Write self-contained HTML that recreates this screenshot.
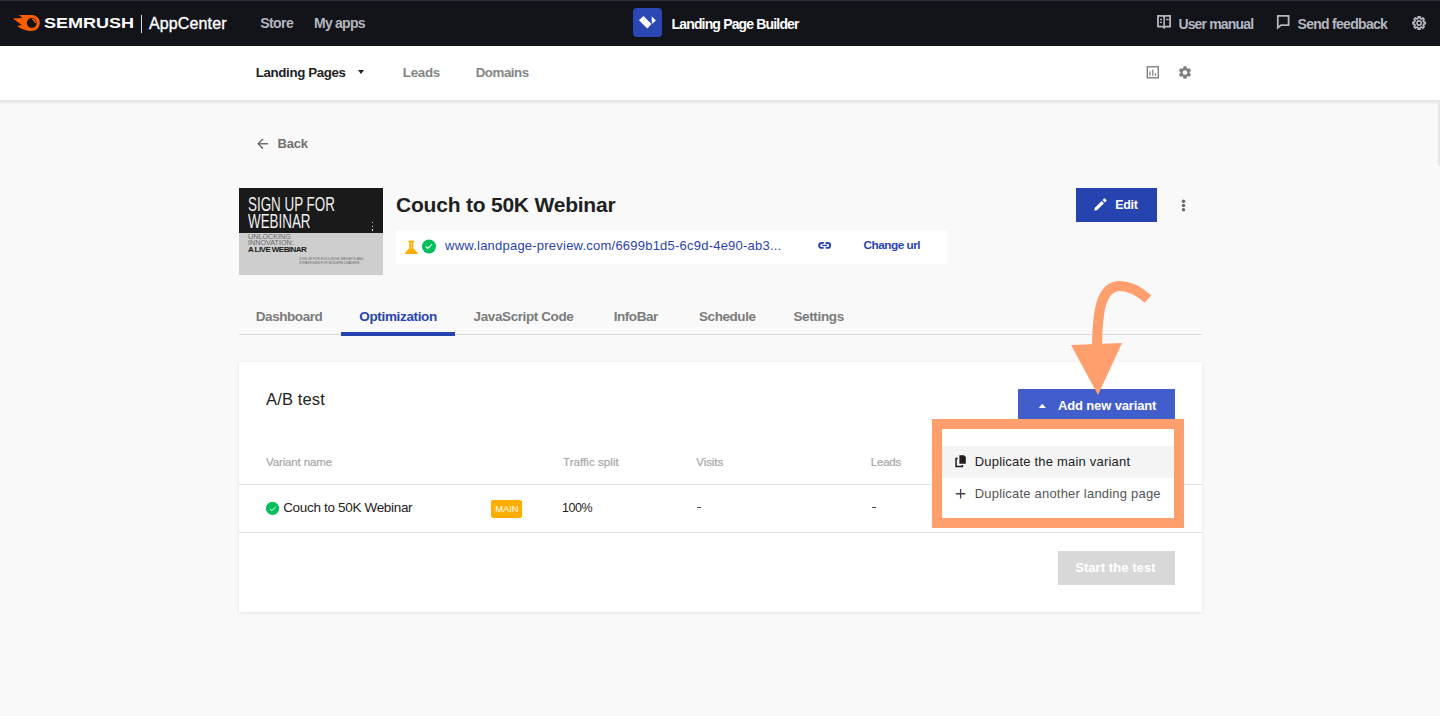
<!DOCTYPE html>
<html><head><meta charset="utf-8">
<style>
*{margin:0;padding:0;box-sizing:border-box}
html,body{width:1440px;height:716px;overflow:hidden;background:#f9f9f9;font-family:"Liberation Sans",sans-serif;position:relative}
.a{position:absolute}
.t{position:absolute;white-space:nowrap;line-height:1}
</style></head><body>
<!-- bars -->
<div class="a" style="left:0;top:0;width:1440px;height:46px;background:#131419"></div>
<div class="a" style="left:0;top:0;width:1440px;height:1px;background:#2d303c"></div>
<div class="a" style="left:0;top:46px;width:1440px;height:54px;background:#fff"></div>
<div class="a" style="left:0;top:100px;width:1440px;height:5px;background:linear-gradient(#e2e2e2,#f9f9f9)"></div>

<div class="a" style="left:1438px;top:100px;width:2px;height:66px;background:#e6e6e6"></div>
<!-- semrush logo -->
<svg class="a" style="left:0;top:0" width="48" height="46" viewBox="0 0 48 46">
  <path d="M18.9 15.1 L31.8 15 A8 8 0 0 1 31.8 31 Q24 31 16.9 26 L21.8 25 L12.9 18.5 L22.5 18 Z" fill="#ff5e00"/>
  <circle cx="31.8" cy="23" r="4.9" fill="#131419"/>
  <path d="M32 19.4 A3.5 3.5 0 0 1 35.4 23" stroke="#ff5e00" stroke-width="1.4" fill="none"/>
</svg>
<div class="t" id="semrush" style="left:44px;top:15px;font-size:15px;font-weight:bold;color:#fff;transform-origin:0 0;transform:scaleX(1.2)">SEMRUSH</div>
<div class="a" style="left:141px;top:15px;width:1px;height:18px;background:#d8d8dc"></div>

<!-- app icon -->
<div class="a" style="left:633px;top:8px;width:29px;height:29px;border-radius:4px;background:#2a47b3"></div>
<svg class="a" style="left:620px;top:0" width="50" height="46" viewBox="620 0 50 46">
  <path d="M638.9 20.3 L643.5 16 L651.4 24.1 L647.3 28.6 Z" fill="#fff"/>
  <path d="M651.6 16.3 L655.9 20.6 L651.9 24.1 Z" fill="#fff"/>
</svg>

<!-- right icons top -->
<svg class="a" style="left:1150px;top:0" width="290" height="46" viewBox="1150 0 290 46">
  <g fill="none" stroke="#b4b7c0" stroke-width="1.8">
    <path d="M1158 15.9 H1163.2 L1164.2 16.9 L1165.2 15.9 H1170.1 V26.6 H1165.2 L1164.2 27.8 L1163.2 26.6 H1158 Z"/>
    <path d="M1164.2 17 V26.5" stroke-width="1.6"/>
    <path d="M1277.8 15.9 H1288.6 V25.1 H1281 L1277.8 27.8 Z"/>
  </g>
  <g stroke="#b4b7c0" stroke-width="1.3">
    <path d="M1160 19.5 H1162 M1160 22.4 H1162 M1166.2 19.5 H1168.6"/>
  </g>
  <g transform="translate(1419.1 23)">
    <path id="gearo" fill="none" stroke="#b4b7c0" stroke-width="1.7" stroke-linejoin="round" d="M-1.13 -4.56 L-1.02 -6.12 L1.02 -6.12 L1.13 -4.56 L2.42 -4.03 L3.60 -5.04 L5.04 -3.60 L4.03 -2.42 L4.56 -1.13 L6.12 -1.02 L6.12 1.02 L4.56 1.13 L4.03 2.42 L5.04 3.60 L3.60 5.04 L2.42 4.03 L1.13 4.56 L1.02 6.12 L-1.02 6.12 L-1.13 4.56 L-2.42 4.03 L-3.60 5.04 L-5.04 3.60 L-4.03 2.42 L-4.56 1.13 L-6.12 1.02 L-6.12 -1.02 L-4.56 -1.13 L-4.03 -2.42 L-5.04 -3.60 L-3.60 -5.04 L-2.42 -4.03 Z"/>
    <circle r="2.1" fill="none" stroke="#b4b7c0" stroke-width="1.6"/>
  </g>
</svg>

<!-- subnav icons -->
<div class="a" style="left:357.8px;top:70.3px;width:0;height:0;border-left:3.6px solid transparent;border-right:3.6px solid transparent;border-top:4.2px solid #222"></div>
<svg class="a" style="left:1140px;top:60px" width="60" height="26" viewBox="1140 60 60 26">
  <rect x="1147.3" y="66.8" width="11" height="11" fill="none" stroke="#808080" stroke-width="1.4"/>
  <path d="M1149.9 71.2 V75.7 M1152.8 69.4 V75.7 M1155.5 73.2 V75.7" stroke="#808080" stroke-width="1.2"/>
  <g transform="translate(1185 72.5) scale(0.64) translate(-12 -12)"><path id="gearf" fill="#808080" d="M19.14,12.94c0.04-0.3,0.06-0.61,0.06-0.94c0-0.32-0.02-0.64-0.07-0.94l2.03-1.58c0.18-0.14,0.23-0.41,0.12-0.61 l-1.92-3.32c-0.12-0.22-0.37-0.29-0.59-0.22l-2.39,0.96c-0.5-0.38-1.03-0.7-1.62-0.94L14.4,2.81c-0.04-0.24-0.24-0.41-0.48-0.41 h-3.84c-0.24,0-0.43,0.17-0.47,0.41L9.25,5.35C8.66,5.59,8.12,5.92,7.63,6.29L5.24,5.33c-0.22-0.08-0.47,0-0.59,0.22L2.74,8.87 C2.62,9.08,2.66,9.34,2.86,9.48l2.03,1.58C4.84,11.36,4.8,11.69,4.8,12s0.02,0.64,0.07,0.94l-2.03,1.58 c-0.18,0.14-0.23,0.41-0.12,0.61l1.92,3.32c0.12,0.22,0.37,0.29,0.59,0.22l2.39-0.96c0.5,0.38,1.03,0.7,1.62,0.94l0.36,2.54 c0.05,0.24,0.24,0.41,0.48,0.41h3.84c0.24,0,0.44-0.17,0.47-0.41l0.36-2.54c0.59-0.24,1.13-0.56,1.62-0.94l2.39,0.96 c0.22,0.08,0.47,0,0.59-0.22l1.92-3.32c0.12-0.22,0.07-0.47-0.12-0.61L19.14,12.94z M12,15.6c-1.98,0-3.6-1.62-3.6-3.6 s1.62-3.6,3.6-3.6s3.6,1.62,3.6,3.6S13.98,15.6,12,15.6z"/></g>
</svg>

<!-- back arrow -->
<svg class="a" style="left:250px;top:130px" width="30" height="26" viewBox="250 130 30 26">
  <path d="M268 143.8 H258.5 M263 139 L258.2 143.8 L263 148.6" fill="none" stroke="#707070" stroke-width="1.5"/>
</svg>

<!-- thumbnail -->
<div class="a" style="left:239px;top:188px;width:144px;height:87px;background:#cecece;overflow:hidden">
  <div class="a" style="left:0;top:0;width:144px;height:45px;background:#1a1a1a"></div>
  <div class="t" id="th1" style="left:9px;top:8px;font-size:20.4px;color:#f0f0f0;transform-origin:0 0;transform:scaleX(0.657);line-height:16.8px">SIGN UP FOR<br>WEBINAR</div>
  <div class="a" style="left:133px;top:34px;width:1.4px;height:1.4px;background:#ccc"></div>
  <div class="a" style="left:133px;top:37.5px;width:1.4px;height:1.4px;background:#ccc"></div>
  <div class="a" style="left:133px;top:41px;width:1.4px;height:1.6px;background:#eee"></div>
  <div class="t" id="th2" style="left:9px;top:46px;font-size:7.2px;color:#6a6a6a;line-height:6px;transform-origin:0 0;transform:scaleX(1.0)">UNLOCKING<br>INNOVATION:</div>
  <div class="t" id="th3" style="left:9px;top:58.2px;font-size:8px;font-weight:bold;color:#1a1a1a;letter-spacing:-0.55px">A LIVE WEBINAR</div>
  <div class="t" id="th4" style="left:60px;top:69px;font-size:3.8px;color:#666;line-height:4px;transform-origin:0 0;transform:scaleX(0.87)">JOIN US FOR EXCLUSIVE INSIGHTS AND<br>STRATEGIES FOR MODERN LEADERS</div>
</div>
<!-- url bar -->
<div class="a" style="left:396px;top:230px;width:551px;height:34px;background:#fff"></div>
<svg class="a" style="left:400px;top:236px" width="40" height="22" viewBox="400 236 40 22">
  <path d="M408.2 240.8 H414.4 V242.2 H413.3 V248.2 L417.8 253 Q418 254 417 254 H405.6 Q404.6 254 405 253 L409.3 248.2 V242.2 H408.2 Z" fill="#ffae00"/>
  <rect x="410.9" y="242.3" width="1.1" height="6.5" fill="#ffd37a"/>
  <circle cx="429" cy="246.5" r="7" fill="#00bf5a"/>
  <path d="M425.6 246.4 L427.6 248.5 L432.1 244.2" fill="none" stroke="#fff" stroke-width="1.1"/>
</svg>
<svg class="a" style="left:812px;top:236px" width="26" height="20" viewBox="812 236 26 20">
  <g fill="none" stroke="#2a43b0" stroke-width="1.9">
    <path d="M823.7 243 H821.6 A2.45 2.45 0 0 0 821.6 247.9 H823.7"/>
    <path d="M825.6 243 H827.7 A2.45 2.45 0 0 1 827.7 247.9 H825.6"/>
    <path d="M822.2 245.45 H827.2" stroke-width="1.4"/>
  </g>
</svg>

<!-- edit button -->
<div class="a" style="left:1076px;top:188px;width:81px;height:34px;background:#2644b0"></div>
<svg class="a" style="left:1090px;top:195px" width="20" height="20" viewBox="1090 195 20 20">
  <path d="M1094.3 210.6 L1094.6 207.9 L1101.6 200.9 L1104 203.3 L1097 210.3 Z" fill="#fff"/>
  <path d="M1102.5 200 L1104.1 198.4 Q1104.5 198.1 1104.9 198.4 L1106.5 200 Q1106.8 200.4 1106.5 200.8 L1104.9 202.4 Z" fill="#fff"/>
</svg>
<svg class="a" style="left:1176px;top:194px" width="16" height="22" viewBox="1176 194 16 22">
  <circle cx="1183.5" cy="201.2" r="1.7" fill="#666"/>
  <circle cx="1183.5" cy="205.5" r="1.7" fill="#666"/>
  <circle cx="1183.5" cy="209.8" r="1.7" fill="#666"/>
</svg>

<!-- tabs -->
<div class="a" style="left:239px;top:334px;width:963px;height:1px;background:#dadada"></div>
<div class="a" style="left:341px;top:332px;width:114px;height:4px;background:#2644b0"></div>

<!-- card -->
<div class="a" style="left:239px;top:362px;width:963px;height:250px;background:#fff;box-shadow:0 1px 4px rgba(0,0,0,.09)"></div>
<div class="a" style="left:1018px;top:389px;width:157px;height:34px;background:#425dcc"></div>
<svg class="a" style="left:1030px;top:396px" width="24" height="20" viewBox="1030 396 24 20">
  <path d="M1038.7 408 L1042.3 403.8 L1045.9 408 Z" fill="#fff"/>
</svg>
<div class="a" style="left:239px;top:484px;width:963px;height:1px;background:#e0e0e0"></div>
<div class="a" style="left:239px;top:532px;width:963px;height:1px;background:#e0e0e0"></div>
<svg class="a" style="left:262px;top:498px" width="24" height="20" viewBox="262 498 24 20">
  <circle cx="272.5" cy="508.4" r="6.6" fill="#00bf5a"/>
  <path d="M269.9 508.9 L271.8 510.6 L275.7 507" fill="none" stroke="#fff" stroke-width="1.0"/>
</svg>
<div class="a" style="left:491px;top:500px;width:31px;height:18px;border-radius:2px;background:#ffae00"></div>
<div class="t" style="left:495.3px;top:503.5px;font-size:9.4px;color:#fff;letter-spacing:-0.1px">MAIN</div>
<div class="a" style="left:696.6px;top:507px;width:4.4px;height:1.3px;background:#4a4a4a"></div>
<div class="a" style="left:872px;top:507px;width:4.4px;height:1.3px;background:#4a4a4a"></div>

<div class="a" style="left:1058px;top:551px;width:117px;height:34px;background:#d8d8d8"></div>

<!-- dropdown with orange frame -->
<div class="a" style="left:932px;top:419px;width:252px;height:109px;border:10px solid #ff9f6e;background:#fff"></div>
<div class="a" style="left:942px;top:446px;width:232px;height:32px;background:#f4f4f4"></div>
<svg class="a" style="left:950px;top:450px" width="20" height="50" viewBox="950 450 20 50">
  <path d="M959.4 455.2 H964 L965.8 457 V463.7 H959.4 Z" fill="#1e1e1e"/>
  <path d="M957.8 458.6 H956 V466.5 H962.4 V465" fill="none" stroke="#1e1e1e" stroke-width="1.5"/>
  <path d="M960.6 489 V498.5 M955.8 493.75 H965.4" stroke="#444" stroke-width="1.3"/>
</svg>

<div class="t" style="left:149.0px;top:16px;font-size:16px;letter-spacing:0.125px;color:#ffffff;-webkit-text-stroke:0.35px #fff;">AppCenter</div>
<div class="t" style="left:260.3px;top:16px;font-size:14px;font-weight:bold;letter-spacing:-0.6px;color:#b4b7c0;">Store</div>
<div class="t" style="left:314.0px;top:16px;font-size:14px;font-weight:bold;letter-spacing:-0.75px;color:#b4b7c0;">My apps</div>
<div class="t" style="left:671.5px;top:17px;font-size:14px;font-weight:bold;letter-spacing:-0.837px;color:#ffffff;">Landing Page Builder</div>
<div class="t" style="left:1178.4px;top:17px;font-size:14px;font-weight:bold;letter-spacing:-0.84px;color:#b4b7c0;">User manual</div>
<div class="t" style="left:1297.5px;top:17px;font-size:14px;font-weight:bold;letter-spacing:-0.708px;color:#b4b7c0;">Send feedback</div>
<div class="t" style="left:255.8px;top:66px;font-size:13.3px;font-weight:bold;letter-spacing:-0.367px;color:#222222;">Landing Pages</div>
<div class="t" style="left:402.75px;top:66px;font-size:13.3px;font-weight:bold;letter-spacing:-0.237px;color:#858585;">Leads</div>
<div class="t" style="left:475.7px;top:66px;font-size:13.3px;font-weight:bold;letter-spacing:-0.45px;color:#858585;">Domains</div>
<div class="t" style="left:277.6px;top:137px;font-size:13px;font-weight:bold;letter-spacing:-0.2px;color:#707070;">Back</div>
<div class="t" style="left:396.0px;top:194px;font-size:21px;font-weight:bold;letter-spacing:-0.211px;color:#1f1f1f;">Couch to 50K Webinar</div>
<div class="t" style="left:445.1px;top:239px;font-size:13px;letter-spacing:0.222px;color:#2a43b0;">www.landpage-preview.com/6699b1d5-6c9d-4e90-ab3...</div>
<div class="t" style="left:863.5px;top:240px;font-size:11.8px;font-weight:bold;letter-spacing:-0.5px;color:#2a43b0;">Change url</div>
<div class="t" style="left:1115.2px;top:199px;font-size:12.5px;font-weight:bold;letter-spacing:-0.333px;color:#ffffff;">Edit</div>
<div class="t" style="left:255.8px;top:310px;font-size:13.5px;font-weight:bold;letter-spacing:-0.438px;color:#7b7b7b;">Dashboard</div>
<div class="t" style="left:359.3px;top:310px;font-size:13.5px;font-weight:bold;letter-spacing:-0.345px;color:#2a43b0;">Optimization</div>
<div class="t" style="left:473.6px;top:310px;font-size:13.5px;font-weight:bold;letter-spacing:-0.4px;color:#7b7b7b;">JavaScript Code</div>
<div class="t" style="left:613.7px;top:310px;font-size:13.5px;font-weight:bold;letter-spacing:-0.45px;color:#7b7b7b;">InfoBar</div>
<div class="t" style="left:699.0px;top:310px;font-size:13.5px;font-weight:bold;letter-spacing:-0.429px;color:#7b7b7b;">Schedule</div>
<div class="t" style="left:793.4px;top:310px;font-size:13.5px;font-weight:bold;letter-spacing:-0.343px;color:#7b7b7b;">Settings</div>
<div class="t" style="left:266.1px;top:391px;font-size:16.5px;letter-spacing:0.129px;color:#222222;">A/B test</div>
<div class="t" style="left:1058.0px;top:399px;font-size:13px;font-weight:bold;letter-spacing:-0.143px;color:#ffffff;">Add new variant</div>
<div class="t" style="left:266.0px;top:457px;font-size:11.5px;letter-spacing:-0.136px;color:#a6a6a6;-webkit-text-stroke:0.2px #a6a6a6;">Variant name</div>
<div class="t" style="left:563.0px;top:457px;font-size:11.5px;letter-spacing:0.062px;color:#a6a6a6;-webkit-text-stroke:0.2px #a6a6a6;">Traffic split</div>
<div class="t" style="left:696.25px;top:457px;font-size:11.5px;letter-spacing:-0.05px;color:#a6a6a6;-webkit-text-stroke:0.2px #a6a6a6;">Visits</div>
<div class="t" style="left:870.7px;top:457px;font-size:11.5px;letter-spacing:-0.175px;color:#a6a6a6;-webkit-text-stroke:0.2px #a6a6a6;">Leads</div>
<div class="t" style="left:283.2px;top:501px;font-size:13.5px;letter-spacing:-0.326px;color:#222222;">Couch to 50K Webinar</div>
<div class="t" style="left:562.0px;top:502px;font-size:12.5px;letter-spacing:-0.417px;color:#222222;">100%</div>
<div class="t" style="left:1075.2px;top:561px;font-size:13px;font-weight:bold;letter-spacing:0.069px;color:#ffffff;">Start the test</div>
<div class="t" style="left:974.7px;top:455px;font-size:13px;letter-spacing:0.204px;color:#222222;">Duplicate the main variant</div>
<div class="t" style="left:974.7px;top:487px;font-size:13px;letter-spacing:0.203px;color:#555555;">Duplicate another landing page</div>

<!-- arrow -->
<svg class="a" style="left:0;top:0" width="1440" height="716" viewBox="0 0 1440 716">
  <path d="M1097 350 C1097 305 1103 286 1120 286 C1130 286 1140 292 1148 299" stroke="#ff9f6e" stroke-width="10" fill="none"/>
  <path d="M1071 345 L1122 343 L1098 395 Z" fill="#ff9f6e"/>
</svg>
</body></html>
